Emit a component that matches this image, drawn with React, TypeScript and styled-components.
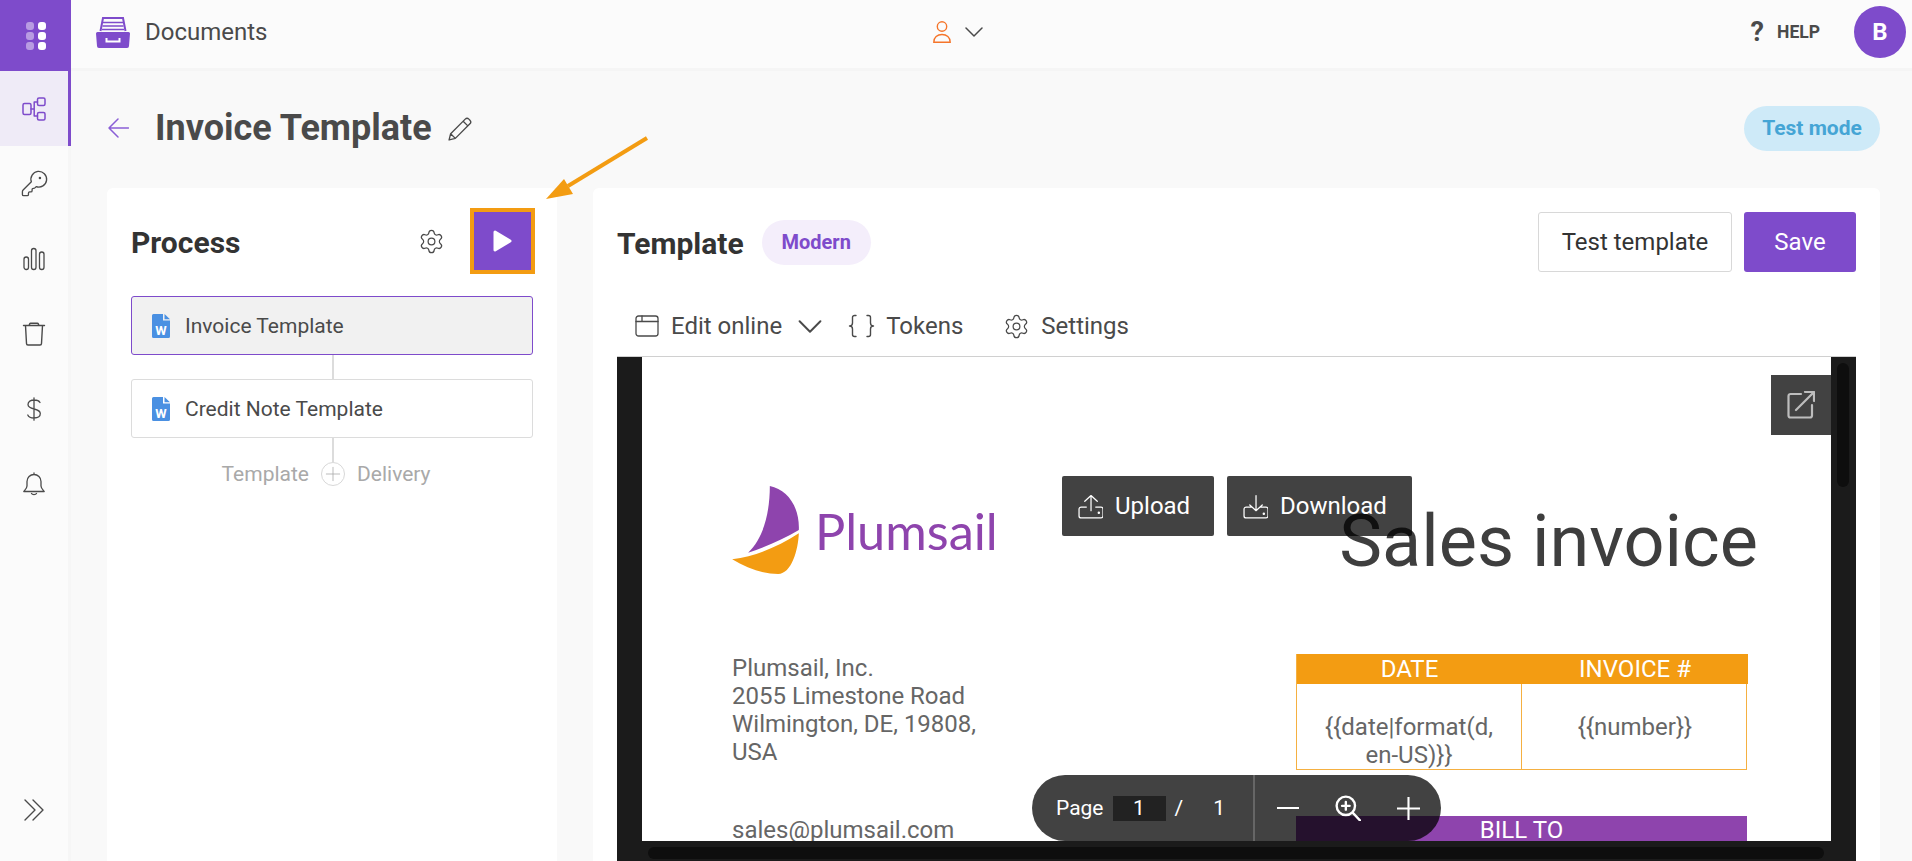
import React from "react";
import styled, { createGlobalStyle } from "styled-components";
import { KeyRound, Settings } from "lucide-react";

const PURPLE = "#7e4bcb";
const INK = "#4a4a4a";

const Global = createGlobalStyle`
  html, body { margin: 0; padding: 0; height: 861px; overflow: hidden; background: #f9f9f9; }
  body { font-family: Roboto, "Liberation Sans", sans-serif; color: ${INK}; }
  #root { height: 100%; }
  * { box-sizing: border-box; }
`;

const Shell = styled.div`position: relative; display: flex; height: 861px; width: 1912px; overflow: hidden;`;

const Sidebar = styled.nav`display: flex; flex-direction: column; width: 71px; flex: none; background: #fbfbfb; border-right: 3px solid #f6f6f6; padding-bottom: 40px;`;
const AppTile = styled.div`width: 71px; height: 71px; background: ${PURPLE}; display: grid; place-items: center;`;
const NavItem = styled.div<{ $active?: boolean }>`
  width: ${p => (p.$active ? 71 : 68)}px; height: 75px; display: flex; align-items: center; justify-content: center;
  color: ${p => (p.$active ? PURPLE : INK)};
  background: ${p => (p.$active ? "#efebf7" : "transparent")};
  border-right: ${p => (p.$active ? `3px solid ${PURPLE}` : "0")};
`;
const NavFoot = styled.div`margin-top: auto; height: 22px; display: flex; justify-content: center; color: ${INK};`;

const Column = styled.div`flex: 1; min-width: 0; display: flex; flex-direction: column;`;
const TopBar = styled.header`
  height: 71px; flex: none; display: grid; grid-template-columns: 862px auto 1fr; align-items: center;
  background: #fbfbfb; border-bottom: 3px solid #f5f5f5; padding-bottom: 4px;
`;
const Crumb = styled.div`display: flex; align-items: center; gap: 15px; padding-left: 25px; font-size: 24px; color: ${INK};`;
const UserMenu = styled.div`display: flex; align-items: center; gap: 14px; color: #f5752a;`;
const Chevron = styled.span`display: inline-flex; color: ${INK};`;
const TopRight = styled.div`display: flex; align-items: center; justify-content: flex-end; padding-right: 6px;`;
const HelpMark = styled.span`font-size: 27px; font-weight: 700; color: ${INK}; margin-right: 13px; line-height: 1;`;
const HelpText = styled.span`font-size: 17.5px; font-weight: 700; color: ${INK}; margin-right: 34px;`;
const Avatar = styled.div`width: 52px; height: 52px; border-radius: 50%; background: ${PURPLE}; color: #fff; display: grid; place-items: center; font-weight: 700; font-size: 24px;`;

const Main = styled.main`flex: 1; min-height: 0; display: flex; flex-direction: column; padding: 0 32px 0 36px;`;
const Heading = styled.div`height: 117px; flex: none; display: flex; align-items: center; padding-bottom: 3px;`;
const BackIcon = styled.span`display: inline-flex; color: #8a5fd6; margin: 0 26px 0 1px;`;
const Title = styled.h1`margin: 0; font-size: 36px; font-weight: 700; color: ${INK}; line-height: 1;`;
const EditIcon = styled.span`display: inline-flex; color: ${INK}; margin-left: 15px;`;
const ModeBadge = styled.div`
  margin-left: auto; height: 45px; width: 136px; border-radius: 23px; background: #ceeaf8; color: #45a5d5;
  display: grid; place-items: center; font-weight: 700; font-size: 21px;
`;

const Cards = styled.div`flex: 1; min-height: 0; display: flex; gap: 36px;`;
const ProcessCard = styled.section`width: 450px; flex: none; background: #fff; border-radius: 6px 6px 0 0; padding: 20px 24px 0;`;
const ProcessHead = styled.div`display: flex; align-items: center; height: 66px; margin-bottom: 22px;`;
const H2 = styled.h2`margin: 3px 0 0; font-size: 30px; font-weight: 700; color: #333; line-height: 1;`;
const Gear = styled.span`display: inline-flex; color: ${INK}; margin-left: auto; margin-right: 25px;`;
const PlayBtn = styled.button`
  width: 65px; height: 66px; border: 4px solid #f39c12; background: ${PURPLE}; padding: 0; margin-right: -2px;
  display: grid; place-items: center;
`;
const Node = styled.div<{ $selected?: boolean }>`
  height: 59px; display: flex; align-items: center; gap: 15px; padding-left: 20px; width: 402px;
  border: 1px solid ${p => (p.$selected ? PURPLE : "#dcdcdc")}; border-radius: 3px;
  background: ${p => (p.$selected ? "#f1f1f1" : "#fff")}; font-size: 21px; color: ${INK};
`;
const Link = styled.div<{ $h: number }>`width: 2px; height: ${p => p.$h}px; background: #dcdcdc; margin-left: 201px;`;
const AddRow = styled.div`display: grid; grid-template-columns: 1fr auto 1fr; align-items: center; width: 404px; gap: 12px; font-size: 21px; color: #a9a9a9; height: 24px;`;
const AddLabelLeft = styled.span`text-align: right;`;
const AddCircle = styled.span`width: 24px; height: 24px; border: 1px solid #d8d8d8; border-radius: 50%; display: grid; place-items: center; color: #a9a9a9;`;

const TemplateCard = styled.section`flex: 1; min-width: 0; background: #fff; border-radius: 6px 6px 0 0; padding: 24px 24px 0; display: flex; flex-direction: column;`;
const TemplateHead = styled.div`display: flex; align-items: center; height: 60px; flex: none;`;
const Chip = styled.span`margin-left: 18px; height: 45px; width: 109px; border-radius: 23px; background: #f4eefb; color: ${PURPLE}; display: grid; place-items: center; font-weight: 700; font-size: 20px;`;
const GhostBtn = styled.button`
  margin-left: auto; width: 194px; height: 60px; border: 1px solid #d8d8d8; border-radius: 3px; background: #fff;
  font: 400 24px Roboto, sans-serif; color: #333;
`;
const PrimaryBtn = styled.button`
  margin-left: 12px; width: 112px; height: 60px; border: 0; border-radius: 3px; background: ${PURPLE};
  font: 400 24px Roboto, sans-serif; color: #fff;
`;
const Toolbar = styled.div`flex: none; display: flex; align-items: center; height: 60px; margin-top: 24px; font-size: 24px; color: ${INK}; padding-left: 18px;`;
const ToolText = styled.span<{ $gap: number }>`margin-left: ${p => p.$gap}px;`;
const ToolIcon = styled.span<{ $gap?: number }>`display: inline-flex; margin-left: ${p => p.$gap ?? 0}px;`;

const Viewer = styled.div`
  flex: 1; min-height: 0; position: relative; background: #1b1b1b; border-top: 1px solid #d0d0d0;
  padding: 0 25px 20px; display: flex;
`;
const VThumb = styled.div`position: absolute; right: 7px; top: 6px; width: 12px; height: 124px; border-radius: 6px; background: #0e0e0e;`;
const HThumb = styled.div`position: absolute; left: 31px; right: 32px; bottom: 2px; height: 12px; border-radius: 6px; background: #0e0e0e;`;
const DocPage = styled.div`flex: 1; min-width: 0; position: relative; background: #fff; overflow: hidden; padding: 129px 84px 0 90px;`;
const DocRowTop = styled.div`display: flex; justify-content: space-between; height: 168px;`;
const DocRowBottom = styled.div`display: flex; justify-content: space-between;`;
const Logo = styled.div`display: flex; align-items: flex-start;`;
const LogoName = styled.span`font-family: Lato, sans-serif; font-size: 50.5px; font-weight: 400; color: #8e44ad; line-height: 56px; margin: 17px 0 0 16px;`;
const SalesTitle = styled.div`font-size: 72px; font-weight: 400; color: #3e3e3e; line-height: 88px; margin: 12px -11px 0 0;`;
const Address = styled.div`font-size: 24px; line-height: 28px; color: #666; white-space: nowrap;`;
const Email = styled.div`margin-top: 50px;`;
const InvoiceSide = styled.div`width: 451px;`;
const InvoiceTable = styled.div`display: grid; grid-template-columns: 225px 226px; border: 1px solid #f5b041; border-top: 0;`;
const InvoiceHead = styled.div`height: 30px; background: #f39c12; color: #fff; font-size: 24px; line-height: 30px; text-align: center;`;
const InvoiceCell = styled.div<{ $split?: boolean }>`height: 85px; padding-top: 29px; font-size: 24px; line-height: 28px; color: #666; text-align: center; border-right: ${p => (p.$split ? "1px solid #f5b041" : "0")};`;
const BillTo = styled.div`margin-top: 46px; height: 30px; background: #8e44ad; color: #fff; font-size: 24px; line-height: 28px; text-align: center;`;

const DocActions = styled.div`position: absolute; left: 420px; top: 119px; display: flex; gap: 13px;`;
const DocAction = styled.div<{ $w: number }>`
  width: ${p => p.$w}px; height: 60px; border-radius: 2px; background: rgba(0,0,0,.74); color: #fff;
  display: flex; align-items: center; gap: 12px; padding-left: 16px; font-size: 24px;
`;
const ExpandBtn = styled.div`position: absolute; right: 0; top: 18px; width: 60px; height: 60px; background: rgba(0,0,0,.74); display: grid; place-items: center; color: #bdbdbd;`;
const Pager = styled.div`
  position: absolute; left: 390px; bottom: 0; width: 409px; height: 66px; border-radius: 33px; background: rgba(0,0,0,.74);
  color: #fff; display: flex; align-items: center; font-size: 21px;
`;
const PagerLeft = styled.div`width: 223px; height: 100%; display: flex; align-items: center; padding-left: 24px; border-right: 2px solid #666;`;
const PageInput = styled.span`width: 53px; height: 25px; background: #222; margin-left: 9px; display: grid; place-items: center;`;
const PagerSlash = styled.span`margin-left: 9px;`;
const PagerTotal = styled.span`margin-left: 30px;`;
const PagerRight = styled.div`flex: 1; display: flex; align-items: center; padding-left: 22px; gap: 36px;`;

const Annotation = styled.svg`position: absolute; left: 540px; top: 130px; pointer-events: none;`;

const Stroke: React.FC<{ size?: number; w?: number; h?: number; sw?: number; vb?: string; children: React.ReactNode }> = ({ size = 24, w, h, sw = 1.5, vb = "0 0 24 24", children }) => (
  <svg width={w ?? size} height={h ?? size} viewBox={vb} fill="none" stroke="currentColor" strokeWidth={sw} strokeLinecap="round" strokeLinejoin="round">{children}</svg>
);

const WordIcon = () => (
  <svg width="18" height="24" viewBox="0 0 18 24">
    <path d="M1.5 0H11V6.5H18V22.5a1.5 1.5 0 0 1-1.5 1.5H1.5A1.5 1.5 0 0 1 0 22.5V1.5A1.5 1.5 0 0 1 1.5 0Z" fill="#4a90e2" />
    <path d="M12.5 0 18 5.2H12.5Z" fill="#4a90e2" />
    <text x="9" y="21" textAnchor="middle" fontFamily="Roboto, sans-serif" fontWeight="700" fontSize="13" fill="#fff">W</text>
  </svg>
);

const ChevronDown = ({ w = 18, h = 10 }: { w?: number; h?: number }) => (
  <Stroke w={w} h={h} vb="0 0 18 10" sw={1.5}><path d="M1 1l8 8 8-8" /></Stroke>
);

const App: React.FC = () => (
  <Shell>
    <Global />
    <Sidebar>
      <AppTile>
        <svg width="20" height="28" viewBox="0 0 20 28">
          {[0, 10, 20].map(y => (
            <React.Fragment key={y}>
              <rect x="0" y={y} width="8" height="8" rx="3" fill="#fff" opacity=".45" />
              <rect x="12" y={y} width="8" height="8" rx="3" fill="#fff" />
            </React.Fragment>
          ))}
        </svg>
      </AppTile>
      <NavItem $active>
        <Stroke size={24}>
          <rect x="1" y="6.5" width="8" height="11" rx="1.5" />
          <rect x="15.5" y="1" width="7.5" height="7.5" rx="1.5" />
          <rect x="15.5" y="15.5" width="7.5" height="7.5" rx="1.5" />
          <path d="M9 12h3.2M12.2 5v14M12.2 5h3.3M12.2 19h3.3" />
        </Stroke>
      </NavItem>
      <NavItem><KeyRound size={29} strokeWidth={1.1} /></NavItem>
      <NavItem>
        <Stroke size={24} sw={1.3}>
          <rect x="2" y="10" width="4.5" height="12.5" rx="2.2" />
          <rect x="9.5" y="1.5" width="4.5" height="21" rx="2.2" />
          <rect x="17.5" y="5" width="4.5" height="17.5" rx="2.2" />
        </Stroke>
      </NavItem>
      <NavItem>
        <Stroke size={24} sw={1.4}>
          <path d="M1.5 3.5h21M3.5 3.5l1 18a1.5 1.5 0 0 0 1.5 1.5h12a1.5 1.5 0 0 0 1.5-1.5l1-18M7 3.5l.7-1.6a1 1 0 0 1 .9-.6h6.8a1 1 0 0 1 .9.6L17 3.5" />
        </Stroke>
      </NavItem>
      <NavItem>
        <Stroke size={24} sw={1.3}>
          <path d="M12 .8v22.4M18 5.5C17 3.8 15.3 3 12.5 3 8.7 3 6 4.5 6 7.5c0 6 12.3 3 12.3 9 0 3-3 4.5-6.3 4.5-3 0-5.4-1-6.2-3" />
        </Stroke>
      </NavItem>
      <NavItem>
        <Stroke size={24} sw={1.3}>
          <path d="M12 1v1.5M5 14V9.5a7 7 0 0 1 14 0V14c0 2 1.5 3.5 3.2 5.5H1.8C3.5 17.5 5 16 5 14zM9.5 21.5c.8 1.5 4.2 1.5 5 0" />
        </Stroke>
      </NavItem>
      <NavFoot>
        <Stroke w={20} h={22} vb="0 0 20 22" sw={1.4}><path d="M1 1l10 10L1 21M9 1l10 10L9 21" /></Stroke>
      </NavFoot>
    </Sidebar>

    <Column>
      <TopBar>
        <Crumb>
          <svg width="34" height="31" viewBox="0 0 34 31">
            <path d="M4.5 14 7 1h20l2.5 13" fill="none" stroke={PURPLE} strokeWidth="2" />
            <path d="M7 5.5h20M6.5 9h21M6 12.5h22" stroke={PURPLE} strokeWidth="1.5" />
            <path d="M1.5 15h31a1.5 1.5 0 0 1 1.5 1.5l-1 12.5a2 2 0 0 1-2 2H3a2 2 0 0 1-2-2L0 16.5A1.5 1.5 0 0 1 1.5 15Z" fill={PURPLE} />
            <path d="M10.5 21v3.5h13V21" fill="none" stroke="#fff" strokeWidth="2" />
          </svg>
          Documents
        </Crumb>
        <UserMenu>
          <svg width="18" height="22" viewBox="0 0 18 22" fill="none" stroke="currentColor" strokeWidth="1.4">
            <circle cx="9" cy="5.5" r="4.7" />
            <path d="M.8 21.2c0-4.7 3.5-7.700 8.200-7.700s8.200 3 8.200 7.700z" />
          </svg>
          <Chevron><ChevronDown /></Chevron>
        </UserMenu>
        <TopRight>
          <HelpMark>?</HelpMark>
          <HelpText>HELP</HelpText>
          <Avatar>B</Avatar>
        </TopRight>
      </TopBar>
      <Main>
        <Heading>
          <BackIcon>
            <Stroke w={21} h={20} vb="0 0 21 20" sw={1.5}><path d="M20.5 10H1M10 1l-9 9 9 9" /></Stroke>
          </BackIcon>
          <Title>Invoice Template</Title>
          <EditIcon>
            <Stroke size={25} sw={1.3}>
              <path d="M2 23l1.5-6L17.5 3a2.5 2.5 0 0 1 3.5 0l1 1a2.5 2.5 0 0 1 0 3.5L8 21.5zM3.5 17 8 21.5M15.5 5 20 9.5" />
            </Stroke>
          </EditIcon>
          <ModeBadge>Test mode</ModeBadge>
        </Heading>
        <Cards>
          <ProcessCard>
            <ProcessHead>
              <H2>Process</H2>
              <Gear><Settings size={27} strokeWidth={1.1} /></Gear>
              <PlayBtn>
                <svg width="19" height="22" viewBox="0 0 19 22"><path d="M2 2l15 9-15 9z" fill="#fff" stroke="#fff" strokeWidth="3" strokeLinejoin="round" /></svg>
              </PlayBtn>
            </ProcessHead>
            <Node $selected><WordIcon />Invoice Template</Node>
            <Link $h={24} />
            <Node><WordIcon />Credit Note Template</Node>
            <Link $h={24} />
            <AddRow>
              <AddLabelLeft>Template</AddLabelLeft>
              <AddCircle>
                <Stroke size={16} sw={1.2}><path d="M12 2v20M2 12h20" /></Stroke>
              </AddCircle>
              <span>Delivery</span>
            </AddRow>
          </ProcessCard>
          <TemplateCard>
            <TemplateHead>
              <H2>Template</H2>
              <Chip>Modern</Chip>
              <GhostBtn>Test template</GhostBtn>
              <PrimaryBtn>Save</PrimaryBtn>
            </TemplateHead>
            <Toolbar>
              <ToolIcon>
                <Stroke size={24} sw={1.3}><rect x="1" y="2" width="22" height="20" rx="2.5" /><path d="M1 7.5h22M7 2v5.5" /></Stroke>
              </ToolIcon>
              <ToolText $gap={12}>Edit online</ToolText>
              <ToolIcon $gap={16}><ChevronDown w={24} h={13} /></ToolIcon>
              <ToolIcon $gap={26}>
                <Stroke w={27} h={24} vb="0 0 27 24" sw={1.4}>
                  <path d="M8 1.5H6.5a2 2 0 0 0-2 2V9a3 3 0 0 1-3 3 3 3 0 0 1 3 3v5.5a2 2 0 0 0 2 2H8M19 1.5h1.5a2 2 0 0 1 2 2V9a3 3 0 0 0 3 3 3 3 0 0 0-3 3v5.5a2 2 0 0 1-2 2H19" />
                </Stroke>
              </ToolIcon>
              <ToolText $gap={11}>Tokens</ToolText>
              <ToolIcon $gap={40}><Settings size={27} strokeWidth={1.1} /></ToolIcon>
              <ToolText $gap={11}>Settings</ToolText>
            </Toolbar>
            <Viewer>
              <DocPage>
                <DocRowTop>
                  <Logo>
                    <svg width="67" height="88" viewBox="97 108 200 264">
                      <path d="M210 108C262 118 300 170 297 240C250 268 200 290 145 308C190 265 210 190 210 108Z" fill="#8e44ad" />
                      <path d="M297 250C235 290 170 318 97 328C140 355 190 372 235 372C275 372 295 300 297 250Z" fill="#f39c12" />
                    </svg>
                    <LogoName>Plumsail</LogoName>
                  </Logo>
                  <SalesTitle>Sales invoice</SalesTitle>
                </DocRowTop>
                <DocRowBottom>
                  <Address>
                    Plumsail, Inc.<br />2055 Limestone Road<br />Wilmington, DE, 19808,<br />USA
                    <Email>sales@plumsail.com</Email>
                  </Address>
                  <InvoiceSide>
                    <InvoiceTable>
                      <InvoiceHead>DATE</InvoiceHead>
                      <InvoiceHead>INVOICE #</InvoiceHead>
                      <InvoiceCell $split>{"{{date|format(d,"}<br />{"en-US)}}"}</InvoiceCell>
                      <InvoiceCell>{"{{number}}"}</InvoiceCell>
                    </InvoiceTable>
                    <BillTo>BILL TO</BillTo>
                  </InvoiceSide>
                </DocRowBottom>
                <DocActions>
                  <DocAction $w={152}>
                    <Stroke size={25} sw={1.2}>
                      <path d="M12.5 16V1.5M6.5 7l6-5.5 6 5.5M8 12.5H3a2 2 0 0 0-2 2V21a2 2 0 0 0 2 2h19a2 2 0 0 0 2-2v-6.5a2 2 0 0 0-2-2h-5" />
                      <circle cx="20" cy="18" r=".6" fill="currentColor" />
                    </Stroke>
                    Upload
                  </DocAction>
                  <DocAction $w={185}>
                    <Stroke size={25} sw={1.2}>
                      <path d="M12.5 1.5V16M6.5 10.5l6 5.500 6-5.500M8 12.500H3a2 2 0 0 0-2 2V21a2 2 0 0 0 2 2h19a2 2 0 0 0 2-2v-6.500a2 2 0 0 0-2-2h-5" />
                      <circle cx="20" cy="19" r=".6" fill="currentColor" />
                    </Stroke>
                    Download
                  </DocAction>
                </DocActions>
                <ExpandBtn>
                  <Stroke w={28} h={28} vb="0 0 28 28" sw={2.2}>
                    <path d="M14 3H3.5a2 2 0 0 0-2 2v19.500a2 2 0 0 0 2 2H23a2 2 0 0 0 2-2V14M27 1H18M27 1v9M27 1 9 19" />
                  </Stroke>
                </ExpandBtn>
                <Pager>
                  <PagerLeft>
                    Page
                    <PageInput>1</PageInput>
                    <PagerSlash>/</PagerSlash>
                    <PagerTotal>1</PagerTotal>
                  </PagerLeft>
                  <PagerRight>
                    <Stroke size={22} sw={2.4}><path d="M0 12h24" /></Stroke>
                    <Stroke size={26} sw={2.2}>
                      <circle cx="10" cy="10" r="8.5" /><path d="M16.5 16.5 24 24.5M10 6.5v7M6.5 10h7" />
                    </Stroke>
                    <Stroke size={23} sw={2.2}><path d="M12 0v24M0 12h24" /></Stroke>
                  </PagerRight>
                </Pager>
              </DocPage>
              <VThumb />
              <HThumb />
            </Viewer>
          </TemplateCard>
        </Cards>
      </Main>
    </Column>

    <Annotation width="120" height="80" viewBox="540 130 120 80">
      <path d="M647 138 568 186" stroke="#f39c12" strokeWidth="4" fill="none" />
      <path d="M546 199 564 179 573 194Z" fill="#f39c12" />
    </Annotation>
  </Shell>
);

export default App;
